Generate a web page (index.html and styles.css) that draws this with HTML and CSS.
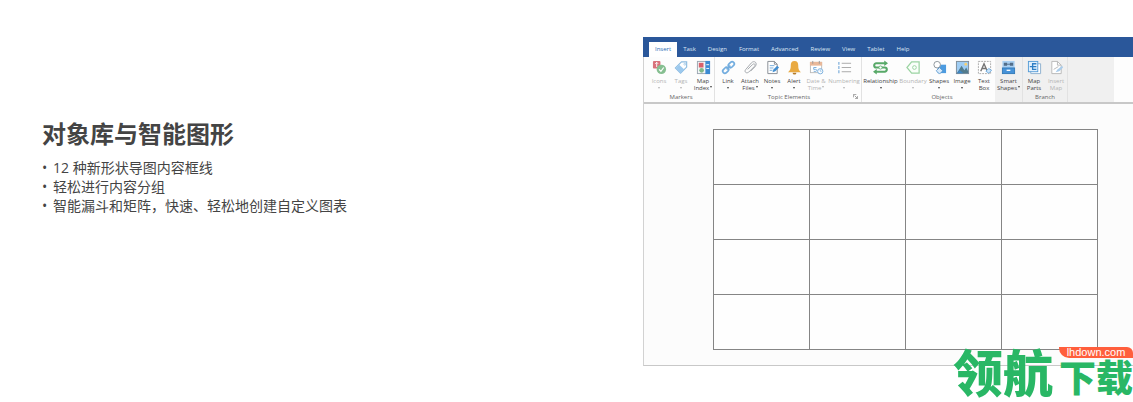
FILE: index.html
```html
<!DOCTYPE html>
<html lang="zh-CN">
<head>
  <meta charset="UTF-8" />
  <meta name="viewport" content="width=device-width, initial-scale=1" />
  <title>对象库与智能图形</title>
  <link rel="stylesheet" href="styles.css">
</head>
<body>
  <main class="feature">
    <section class="intro">
      <h2>对象库与智能图形</h2>
      <ul>
        <li>12 种新形状导图内容框线</li>
        <li>轻松进行内容分组</li>
        <li>智能漏斗和矩阵，快速、轻松地创建自定义图表</li>
      </ul>
    </section>

    <section class="app" lang="en">
      <nav class="tabs">
        <a href="#insert" class="active">Insert</a>
        <a href="#task">Task</a>
        <a href="#design">Design</a>
        <a href="#format">Format</a>
        <a href="#advanced">Advanced</a>
        <a href="#review">Review</a>
        <a href="#view">View</a>
        <a href="#tablet">Tablet</a>
        <a href="#help">Help</a>
      </nav>

      <div class="ribbon">
        <div class="group markers">
          <div class="tools">
            <button type="button" class="tool" disabled>
              <svg viewBox="0 0 16 16"><rect x="1" y="1" width="8" height="8" rx="1" fill="#d9727b"/><path d="M5 2.500v5M3.500 4L5 2.500 6.500 4" stroke="#fff" fill="none"/><circle cx="10" cy="10" r="5" fill="#86bf91"/><path d="M7.500 10l2 2 3-4" stroke="#fff" stroke-width="1.300" fill="none"/></svg>
              <span>Icons</span><i class="caret"></i>
            </button>
            <button type="button" class="tool" disabled>
              <svg viewBox="0 0 16 16"><path d="M1.500 8.500L8 2h5.500v5.500L7 14z" fill="#fff" stroke="#8cbbe0" stroke-width="1.200"/><path d="M2 8.500L5.500 5l5.500 5-4 4z" fill="#9cc9ee"/><circle cx="11.500" cy="4.500" r="1" fill="#fff" stroke="#8cbbe0" stroke-width=".7"/></svg>
              <span>Tags</span><i class="caret"></i>
            </button>
            <button type="button" class="tool">
              <svg viewBox="0 0 16 16"><rect x="1.500" y="1.500" width="13" height="13" fill="#f4f6f8" stroke="#9aa5b0"/><rect x="3" y="3" width="5" height="5" fill="#d8616b"/><circle cx="6" cy="11" r="2.500" fill="#80b98a"/><rect x="10" y="1" width="5" height="14" fill="#3d8bd3"/><path d="M11 5h3M11 9h3" stroke="#fff"/></svg>
              <span>Map<br>Index<i class="caret inline"></i></span>
            </button>
          </div>
          <p>Markers</p>
        </div>

        <div class="group topics">
          <div class="tools">
            <button type="button" class="tool">
              <svg viewBox="0 0 16 16"><g fill="none" stroke="#73addf" stroke-width="1.800"><rect x="-3.500" y="-2.300" width="7" height="4.600" rx="2.300" transform="translate(5 11) rotate(-45)"/><rect x="-3.500" y="-2.300" width="7" height="4.600" rx="2.300" transform="translate(11 5) rotate(-45)"/><path d="M6 10l4-4"/></g></svg>
              <span>Link</span><i class="caret"></i>
            </button>
            <button type="button" class="tool">
              <svg viewBox="0 0 16 16"><path d="M5 10l5-5c2-2 4 0 2 2l-6 6c-3 2-5-1-3-3l6-7c3-3 7 0 4 4l-5 5" fill="none" stroke="#a0a4aa" stroke-width="1"/></svg>
              <span>Attach<br>Files<i class="caret inline"></i></span>
            </button>
            <button type="button" class="tool">
              <svg viewBox="0 0 16 16"><path d="M3 1.500h7l3 3v10H3z" fill="#fff" stroke="#858b92"/><path d="M10 1.500v3h3" fill="none" stroke="#858b92"/><path d="M5 6h5M5 8.500h4M5 11h3" stroke="#72aada"/><path d="M8 13l1-3 4-4 2 2-4 4z" fill="#428ed0"/></svg>
              <span>Notes</span><i class="caret"></i>
            </button>
            <button type="button" class="tool">
              <svg viewBox="0 0 16 16"><path d="M8 1c-3 0-4 2-4 5 0 4-1 5-3 7h14c-2-2-3-3-3-7 0-3-1-5-4-5z" fill="#e9aa42"/><path d="M6 13.500a2 2 0 0 0 4 0z" fill="#b57c29"/></svg>
              <span>Alert</span><i class="caret"></i>
            </button>
            <button type="button" class="tool" disabled>
              <svg viewBox="0 0 16 16"><rect x="1.500" y="2.500" width="12" height="11" fill="#fff" stroke="#bbb"/><path d="M1 2h13v4H1z" fill="#e9b899"/><path d="M4 1v3M11 1v3" stroke="#999"/><path d="M8 8H5v2h2c2 0 2 3-2 2" fill="none" stroke="#77addc"/><circle cx="12" cy="12" r="2.800" fill="#fff" stroke="#77addc"/><path d="M12 10v2h1.500" stroke="#77addc" stroke-width=".7" fill="none"/></svg>
              <span>Date &amp;<br>Time<i class="caret inline"></i></span>
            </button>
            <button type="button" class="tool wide" disabled>
              <svg viewBox="0 0 16 16"><path d="M5 3.500h10M5 8h10M5 12.500h10" stroke="#a6a6a6"/><path d="M2 2v3M2 6.500v3M2 11v3" stroke="#75a9d8" stroke-width="1.200"/></svg>
              <span>Numbering</span><i class="caret"></i>
            </button>
          </div>
          <p>Topic Elements</p>
          <svg class="launcher" viewBox="0 0 6 6"><path d="M.5 4V.5H4M2 2l3 3M5.500 2.500v3h-3" fill="none" stroke="#777" stroke-width=".8"/></svg>
        </div>

        <div class="group objects">
          <div class="tools">
            <button type="button" class="tool relation">
              <svg viewBox="0 0 16 16"><path d="M14 3.500H3.500a2.200 2.200 0 0 0 0 4.500h9a2.200 2.200 0 0 1 0 4.500H2" fill="none" stroke="#58a968" stroke-width="2.200"/><path d="M12 .5l4 3-4 3zM4 9.500l-4 3 4 3z" fill="#58a968"/><circle cx="8" cy="8" r="1.700" fill="#fff" stroke="#58a968" stroke-width=".8"/></svg>
              <span>Relationship</span><i class="caret"></i>
            </button>
            <button type="button" class="tool boundary" disabled>
              <svg viewBox="0 0 16 16"><path d="M6 2h8v12H6L1 8z" fill="#fafffa" stroke="#9bd3a2" stroke-width="1.300"/><circle cx="9" cy="8" r="2" fill="none" stroke="#9bd3a2"/></svg>
              <span>Boundary</span><i class="caret"></i>
            </button>
            <button type="button" class="tool shapes">
              <svg viewBox="0 0 16 16"><rect x="6" y="5" width="9" height="9" fill="#4c9be0"/><circle cx="5.500" cy="5" r="3.500" fill="#fff" stroke="#8b9299"/><path d="M8 8l3.500 3.500L8 15l-3.500-3.500z" fill="#d7eafb" stroke="#4c8fca" stroke-width=".8"/></svg>
              <span>Shapes</span><i class="caret"></i>
            </button>
            <button type="button" class="tool">
              <svg viewBox="0 0 16 16"><rect x="1.500" y="1.500" width="13" height="13" fill="#9fcdf4" stroke="#7c8b98"/><path d="M2 14l5-8 3 5 2-3 2 4v2z" fill="#527b8c"/><path d="M2 14l3-3 4 3z" fill="#3d86c6"/><circle cx="11.500" cy="4.500" r="1.500" fill="#f6cf74"/></svg>
              <span>Image</span><i class="caret"></i>
            </button>
            <button type="button" class="tool">
              <svg viewBox="0 0 16 16"><rect x="1.500" y="1.500" width="13" height="13" fill="#fff" stroke="#aaa" stroke-dasharray="2 1"/><path d="M4 12L7.500 4 11 12M5 9h5" fill="none" stroke="#777" stroke-width="1.500"/><path d="M9.500 12l3-3 3 2-3 3z" fill="#cce5fa" stroke="#559cd8" stroke-width=".8"/></svg>
              <span>Text<br>Box</span>
            </button>
            <button type="button" class="tool smart">
              <svg viewBox="0 0 16 16"><rect x="1.500" y="1" width="13" height="8" fill="#a8cff1"/><path d="M3 3h3.500v3H3zM9.500 3H13v3H9.500z" fill="#526d88"/><path d="M6 4.500h4" stroke="#526d88"/><rect x="1.500" y="8.500" width="13" height="6" fill="#4692d8" stroke="#347bb9"/><path d="M6 11h4" stroke="#fff" stroke-width="1.400"/></svg>
              <span>Smart<br>Shapes<i class="caret inline"></i></span>
            </button>
          </div>
          <p>Objects</p>
        </div>

        <div class="group branch">
          <div class="tools">
            <button type="button" class="tool">
              <svg viewBox="0 0 16 16"><path d="M4 4h10.500v10.500H4z" fill="#fff" stroke="#8cafcf"/><rect x="1.500" y="1.500" width="10" height="11" fill="#e1f0fc" stroke="#559bd6"/><path d="M3 7h3M10 4H6v6h4M6 7h4" fill="none" stroke="#2f7fc5" stroke-width="1.400"/></svg>
              <span>Map<br>Parts</span>
            </button>
            <button type="button" class="tool" disabled>
              <svg viewBox="0 0 16 16"><path d="M3 1.500h6l4 4v9H3z" fill="#fff" stroke="#b7b7b7"/><path d="M9 1.500v4h4M5 10l5-3" fill="none" stroke="#b7b7b7"/><path d="M7 13l2-3 5-4 1 2-4 4z" fill="#a9cceb"/></svg>
              <span>Insert<br>Map</span>
            </button>
          </div>
          <p>Branch</p>
        </div>
        <div class="ribbon-rest"></div>
      </div>

      <div class="canvas">
        <table>
          <tr><td></td><td></td><td></td><td></td></tr>
          <tr><td></td><td></td><td></td><td></td></tr>
          <tr><td></td><td></td><td></td><td></td></tr>
          <tr><td></td><td></td><td></td><td></td></tr>
        </table>
      </div>

      <div class="watermark" lang="zh-CN">
        <span class="mark-large">领航</span>
        <div class="mark-side">
          <span class="mark-site">lhdown.com</span>
          <span class="mark-small">下载</span>
        </div>
      </div>
    </section>
  </main>
</body>
</html>
```
FILE: styles.css
```css
* {
  box-sizing: border-box;
}

body {
  margin: 0;
  background: #fff;
  color: #444;
  font-family: "Open Sans", "Noto Sans CJK SC", sans-serif;
  overflow-x: hidden;
}

.feature {
  display: grid;
  grid-template-columns: 643fr 490fr;
  align-items: start;
  padding: 37px 0 36px;
}

.intro {
  padding: 79px 42px 0;
}

.intro h2 {
  margin: 0;
  font-size: 24px;
  line-height: 36px;
}

.intro ul {
  margin: 6px 0 0;
  padding: 0;
  list-style: none;
  font-size: 14px;
  line-height: 19px;
}

.intro li::before {
  content: "•";
  display: inline-block;
  width: 11px;
}

/* application window */
.app {
  position: relative;
  min-width: 490px;
  border-left: 1px solid #d2d2d2;
  border-bottom: 1px solid #c8c8c8;
  font-size: 6px;
}

.tabs {
  display: flex;
  height: 20px;
  padding: 5px 0 0 6px;
  background: #2a579a;
  margin-left: -1px;
}

.tabs a {
  padding: 0 6px;
  color: #dce6f4;
  line-height: 15px;
  text-decoration: none;
}

.tabs .active {
  background: #fff;
  color: #2a6ab5;
}

.ribbon {
  display: flex;
  height: 47px;
  padding-left: 4px;
  background: #fdfdfd;
  border-bottom: 2px solid #c8c8c8;
}

.group {
  position: relative;
  border-right: 1px solid #e2e2e2;
}

.group.topics {
  padding-left: 2px;
}

.tools {
  display: flex;
  height: 36px;
}

.group p {
  margin: 0;
  line-height: 9px;
  text-align: center;
  color: #666;
}

.tool {
  display: flex;
  flex-direction: column;
  align-items: center;
  width: 22px;
  padding: 3px 0 0;
  border: 0;
  background: none;
  color: #444;
  font: inherit;
  line-height: 7px;
  white-space: nowrap;
}

.tool svg {
  flex: none;
  width: 15px;
  height: 15px;
  margin-bottom: 3px;
}

.tool:disabled {
  color: #b4b4b4;
}

.tool.wide {
  width: 34px;
}

.tool.relation {
  width: 37px;
}

.tool.boundary {
  width: 28px;
}

.tool.shapes {
  width: 24px;
}

.tool.smart {
  width: 27px;
  height: 45px;
  background: #f0f0f0;
}

.caret {
  width: 0;
  margin-top: 2px;
  border: 1px solid transparent;
  border-top: 2px solid currentColor;
}

.caret.inline {
  display: inline-block;
  margin: 0 0 0 1px;
  vertical-align: 1px;
}

.launcher {
  position: absolute;
  right: 3px;
  bottom: 3px;
  width: 5px;
  height: 5px;
}

.branch,
.ribbon-rest {
  background: #f0f0f0;
}

.ribbon-rest {
  flex: 1;
  margin-right: 19px;
}

.canvas {
  padding: 25px 35px 15px 69px;
  background: #fcfcfc;
}

.canvas table {
  width: 100%;
  border-collapse: collapse;
  table-layout: fixed;
  background: #fefefe;
}

.canvas td {
  height: 55px;
  padding: 0;
  border: 1px solid #858585;
}

/* site mark over the lower right corner */
.watermark {
  position: absolute;
  right: 0;
  bottom: -30px;
  display: flex;
  gap: 6px;
  color: #29b765;
  font-family: "Noto Sans CJK SC", sans-serif;
  font-weight: 900;
}

.mark-large {
  font-size: 50px;
  line-height: 46px;
}

.mark-side {
  display: flex;
  flex-direction: column;
  width: 74px;
}

.mark-site {
  border-radius: 0 6px 0 10px;
  background: #ff5e3c;
  color: #fff;
  font-family: "Liberation Sans", sans-serif;
  font-size: 11px;
  font-weight: 400;
  line-height: 11px;
  text-align: center;
}

.mark-small {
  font-size: 37px;
  line-height: 37px;
}
```
